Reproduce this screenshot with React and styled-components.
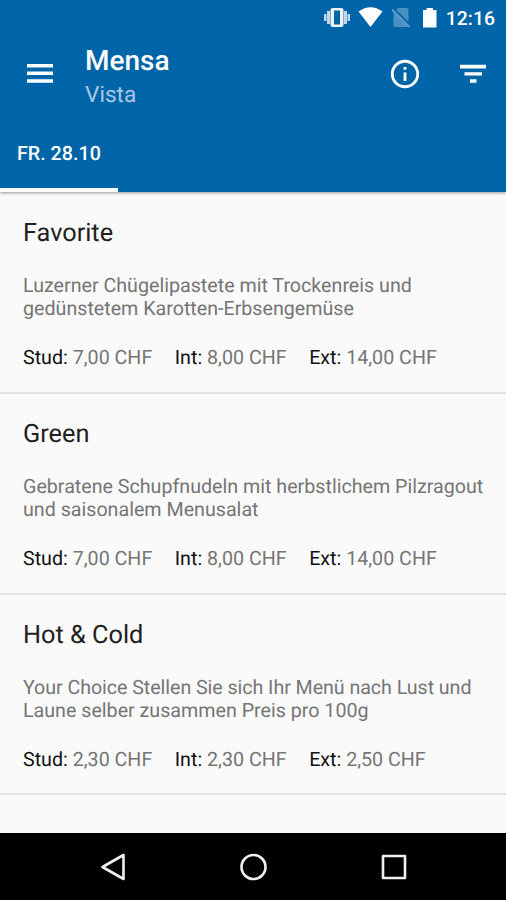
import styled, { createGlobalStyle, ThemeProvider } from "styled-components";

const theme = {
  colors: {
    primary: "#0064a8",
    background: "#fafafa",
    title: "#212121",
    label: "#111111",
    text: "#757575",
    divider: "#e2e2e2",
  },
};

const GlobalStyle = createGlobalStyle`
  * {
    box-sizing: border-box;
  }
  body {
    margin: 0;
    font-family: Roboto, "Liberation Sans", sans-serif;
    text-rendering: geometricPrecision;
  }
  svg {
    display: block;
  }
`;

const Screen = styled.div`
  display: flex;
  flex-direction: column;
  width: 506px;
  height: 900px;
  overflow: hidden;
  background-color: ${({ theme }) => theme.colors.background};
`;

const HeaderBlock = styled.header`
  position: relative;
  flex: none;
  height: 192px;
  color: #fff;
  background-color: ${({ theme }) => theme.colors.primary};
  box-shadow: 0 1px 3px rgba(0, 0, 0, 0.4);
`;

const StatusBar = styled.div`
  display: flex;
  justify-content: flex-end;
  height: 34px;
  padding-right: 11px;
`;

const Clock = styled.span`
  margin-left: 7px;
  font-size: 19.4px;
  font-weight: 500;
  line-height: 37px;
`;

const Toolbar = styled.div`
  display: flex;
  align-items: center;
  height: 79px;
  padding: 0 16px 0 23px;
`;

const IconButton = styled.button`
  padding: 0;
  margin-left: ${({ $gap }) => $gap || 0}px;
  border: none;
  background: none;
  color: inherit;
`;

const TitleBlock = styled.div`
  flex: 1;
  margin-left: 28px;
  padding-top: 7px;
`;

const Title = styled.h1`
  margin: 0;
  font-size: 28px;
  font-weight: 500;
  line-height: 34px;
`;

const SubTitle = styled.div`
  color: #a6c8e1;
  font-size: 22.6px;
  line-height: 33px;
`;

const Tabs = styled.nav`
  display: flex;
  height: 79px;
`;

const Tab = styled.div`
  width: 118px;
  padding: 28px 0 0 17px;
  border-bottom: 4px solid #fff;
  font-size: 19.7px;
  font-weight: 500;
  line-height: 26px;
`;

const MenuList = styled.main`
  flex: 1;
  padding-top: 1px;
`;

const MenuItem = styled.article`
  height: 200.8px;
  padding: 26px 16px 0 23px;
  border-bottom: 2px solid ${({ theme }) => theme.colors.divider};
`;

const MenuTitle = styled.h2`
  margin: 0 0 25px;
  color: ${({ theme }) => theme.colors.title};
  font-size: 25.3px;
  font-weight: 400;
  line-height: 30px;
`;

const Description = styled.p`
  margin: 0 0 26px;
  color: ${({ theme }) => theme.colors.text};
  font-size: 19.66px;
  line-height: 23px;
  white-space: pre-line;
  &::first-line {
    letter-spacing: ${({ $tracking }) => $tracking || 0}px;
  }
`;

const Prices = styled.div`
  display: flex;
  gap: 22.5px;
  color: ${({ theme }) => theme.colors.text};
  font-size: 19.66px;
  line-height: 23px;
`;

const Label = styled.span`
  color: ${({ theme }) => theme.colors.label};
`;

const NavBar = styled.footer`
  display: flex;
  flex: none;
  justify-content: center;
  align-items: center;
  gap: 100px;
  height: 67px;
  background-color: #000;
`;

const menus = [
  {
    title: "Favorite",
    description: "Luzerner Chügelipastete mit Trockenreis und\ngedünstetem Karotten-Erbsengemüse",
    prices: ["7,00", "8,00", "14,00"],
  },
  {
    title: "Green",
    description: "Gebratene Schupfnudeln mit herbstlichem Pilzragout\nund saisonalem Menusalat",
    prices: ["7,00", "8,00", "14,00"],
  },
  {
    title: "Hot & Cold",
    description: "Your Choice Stellen Sie sich Ihr Menü nach Lust und\nLaune selber zusammen Preis pro 100g",
    prices: ["2,30", "2,30", "2,50"],
    tracking: -0.06,
  },
];

const StatusIcons = () => (
  <svg width="118" height="34" viewBox="320 0 118 34" fill="#fff">
    <path
      d="M331.500 8h9a2 2 0 0 1 2 2v15a2 2 0 0 1-2 2h-9a2 2 0 0 1-2-2V10a2 2 0 0 1 2-2zM333 10.500v14h6v-14z"
      fill="#eef3fa"
      fillRule="evenodd"
    />
    <path d="M326 11h3v13h-3zM343 11h3v13h-3zM323 14h2.500v7H323zM346.500 14h2.500v7h-2.500z" fill="#c3d8ec" />
    <path d="M357.500 11.500Q369.500 3 381.500 11.500L369.500 27z" />
    <path d="M397 8h9a1.500 1.500 0 0 1 1.500 1.500v16a1.500 1.500 0 0 1-1.500 1.500h-12a1.500 1.500 0 0 1-1.500-1.500V12.500z" fill="#4a91c1" />
    <path d="M392.500 8.500l18 18" stroke="#0064a8" strokeWidth="2" />
    <path d="M391 9.500l17.500 17.500" stroke="#5b9bc8" strokeWidth="1.800" />
    <path d="M422 10h3.500V8h6.500v2h3.500v17.500H422z" />
  </svg>
);

const MenuIcon = () => (
  <svg width="34" height="34" viewBox="0 0 34 34" fill="#fff">
    <path d="M4 6.900h26v3.500H4zM4 14.600h26v3.500H4zM4 22.300h26v3.500H4z" />
  </svg>
);

const InfoIcon = () => (
  <svg width="34" height="34" viewBox="0 0 24 24" fill="#fff">
    <path d="M11 17h2v-6h-2v6zm1-15C6.480 2 2 6.480 2 12s4.480 10 10 10 10-4.480 10-10S17.520 2 12 2zm0 18c-4.410 0-8-3.590-8-8s3.590-8 8-8 8 3.590 8 8-3.590 8-8 8zM11 9h2V7h-2v2z" />
  </svg>
);

const FilterIcon = () => (
  <svg width="34" height="34" viewBox="0 0 34 34" fill="#fff">
    <path d="M4 7.700h26v3.800H4zM8.500 15.300h17.500v3.300H8.500zM14 22.300h6.500v3.500H14z" />
  </svg>
);

const NavIcon = ({ children }) => (
  <svg width="40" height="40" viewBox="0 0 40 40" fill="none" stroke="#f0f0f0" strokeWidth="2.600" strokeLinejoin="round">
    {children}
  </svg>
);

const Price = ({ name, value }) => (
  <span>
    <Label>{name}:</Label> {value} CHF
  </span>
);

const App = () => {
  return (
    <ThemeProvider theme={theme}>
      <GlobalStyle />
      <Screen>
        <HeaderBlock>
          <StatusBar>
            <StatusIcons />
            <Clock>12:16</Clock>
          </StatusBar>
          <Toolbar>
            <IconButton aria-label="Menu">
              <MenuIcon />
            </IconButton>
            <TitleBlock>
              <Title>Mensa</Title>
              <SubTitle>Vista</SubTitle>
            </TitleBlock>
            <IconButton aria-label="Info">
              <InfoIcon />
            </IconButton>
            <IconButton aria-label="Filter" $gap={34}>
              <FilterIcon />
            </IconButton>
          </Toolbar>
          <Tabs>
            <Tab>FR. 28.10</Tab>
          </Tabs>
        </HeaderBlock>
        <MenuList>
          {menus.map((menu) => (
            <MenuItem key={menu.title}>
              <MenuTitle>{menu.title}</MenuTitle>
              <Description $tracking={menu.tracking}>{menu.description}</Description>
              <Prices>
                <Price name="Stud" value={menu.prices[0]} />
                <Price name="Int" value={menu.prices[1]} />
                <Price name="Ext" value={menu.prices[2]} />
              </Prices>
            </MenuItem>
          ))}
        </MenuList>
        <NavBar>
          <NavIcon>
            <path d="M9.500 20L30.500 8v24z" />
          </NavIcon>
          <NavIcon>
            <circle cx="20.500" cy="20" r="12" />
          </NavIcon>
          <NavIcon>
            <path d="M10 9h22v22H10z" />
          </NavIcon>
        </NavBar>
      </Screen>
    </ThemeProvider>
  );
};

export default App;
